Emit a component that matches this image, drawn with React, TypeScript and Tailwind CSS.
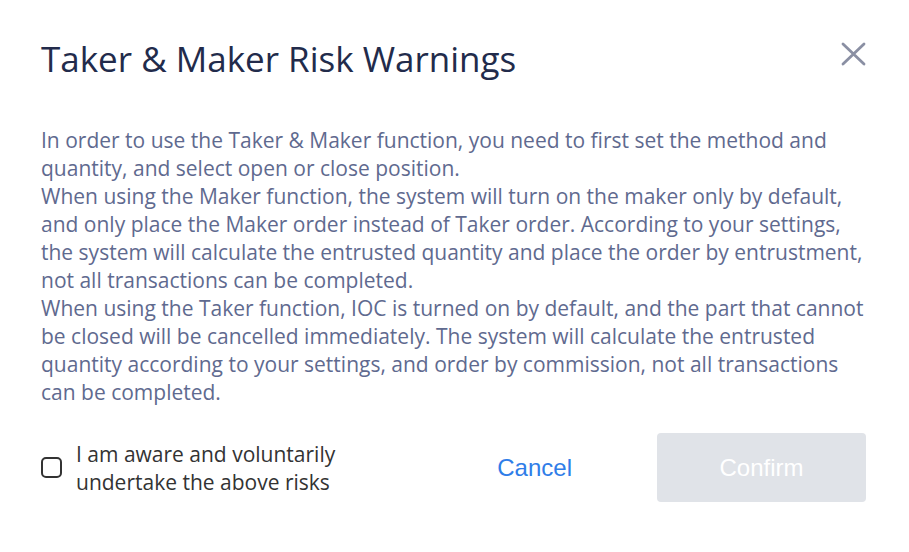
import React from "react";

export default function App() {
  return (
    <div className="w-[909px] h-[552px] bg-white relative" style={{ fontFamily: '"Open Sans", sans-serif' }}>
      <div className="pl-[41px] pr-[43px] pt-[34px]">
        <div className="flex items-start justify-between">
          <h1 className="text-[35px] leading-[50px] text-[#222b4b] font-normal">Taker &amp; Maker Risk Warnings</h1>
          <button className="mt-[8px] mr-[0px] text-[#8a8fa3]">
            <svg width="25" height="24" viewBox="0 0 25 24" fill="none" stroke="currentColor" strokeWidth="2.8" strokeLinecap="round">
              <path d="M2 2 L23 22 M23 2 L2 22" />
            </svg>
          </button>
        </div>
        <div className="mt-[42px] text-[21px] leading-[28px] text-[#5f6a8f]">
          <p>In order to use the Taker &amp; Maker function, you need to first set the method and quantity, and select open or close position.</p>
          <p>When using the Maker function, the system will turn on the maker only by default, and only place the Maker order instead of Taker order. According to your settings, the system will calculate the entrusted quantity and place the order by entrustment, not all transactions can be completed.</p>
          <p>When using the Taker function, IOC is turned on by default, and the part that cannot be closed will be cancelled immediately. The system will calculate the entrusted quantity according to your settings, and order by commission, not all transactions can be completed.</p>
        </div>
        <div className="mt-[27px] flex items-center">
          <div className="flex items-center gap-[14px] flex-1">
            <div className="w-[21px] h-[21px] border-2 border-[#333333] rounded-[5px] shrink-0" />
            <div className="text-[21px] leading-[28px] text-[#333333]">
              I am aware and voluntarily<br />undertake the above risks
            </div>
          </div>
          <button className="text-center text-[24px] text-[#2f7de8] mr-[85px]" style={{ fontFamily: '"Liberation Sans", Arial, sans-serif' }}>Cancel</button>
          <button className="w-[209px] h-[69px] rounded-[4px] bg-[#e0e3e8] text-white text-[24px]" style={{ fontFamily: '"Liberation Sans", Arial, sans-serif' }}>Confirm</button>
        </div>
      </div>
    </div>
  );
}
